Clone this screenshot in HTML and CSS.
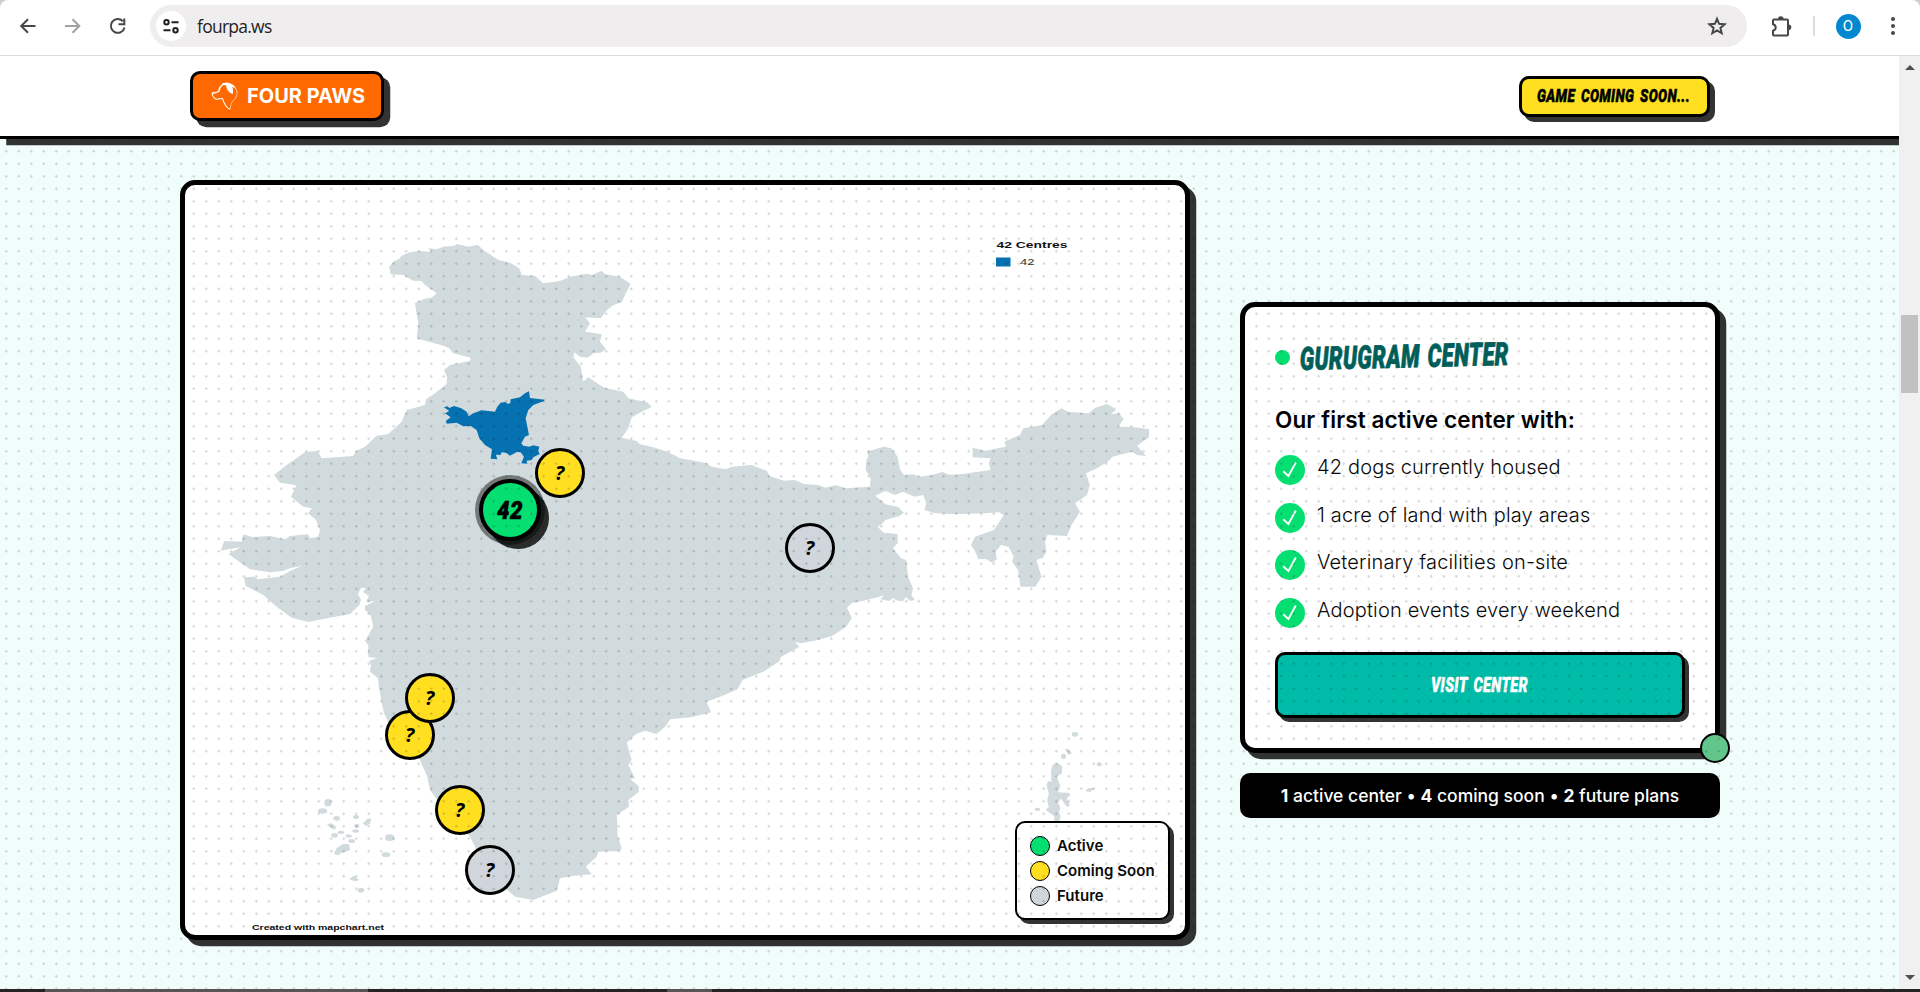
FILE: index.html
```html
<!DOCTYPE html>
<html lang="en">
<head>
<meta charset="utf-8">
<title>Four Paws</title>
<link rel="stylesheet" href="styles.css">
</head>
<body>
<div class="browser">
  <div class="toolbar">
    <div class="nav">
      <svg width="20" height="20" viewBox="0 0 20 20"><path d="M17.500 10H3.500M10 3.200L3.200 10l6.800 6.800" class="ic"/></svg>
      <svg width="20" height="20" viewBox="0 0 20 20" class="dim"><path d="M2 10h14M9.500 3.200l6.800 6.800-6.800 6.800" class="ic"/></svg>
      <svg width="20" height="20" viewBox="0 0 20 20"><path d="M14.800 5.200A6.900 6.900 0 1 0 16.500 11.500M16.300 2.500v5.800h-5.800" class="ic"/></svg>
    </div>
    <div class="omnibox">
      <div class="site"><svg width="18" height="18" viewBox="0 0 18 18"><path d="M9.500 5.200h7M1.500 13.200h7" class="ic dark"/><circle cx="4.500" cy="5.200" r="2.200" class="ic dark"/><circle cx="13.500" cy="13.200" r="2.200" class="ic dark"/></svg></div>
      <span class="url">fourpa.ws</span>
      <svg class="star" width="22" height="22" viewBox="0 0 22 22"><path d="M11 3.800l2.100 5 5.500.5-4.200 3.600 1.300 5.400L11 15.500l-4.700 2.800 1.300-5.400-4.200-3.600 5.500-.5z" class="ic"/></svg>
    </div>
    <div class="tools">
      <svg width="24" height="24" viewBox="0 0 24 24"><path d="M4 6.500a1 1 0 0 1 1-1h13a1 1 0 0 1 1 1v14a1 1 0 0 1-1 1H5a1 1 0 0 1-1-1v-3.800c3.600-.9 3.600-5.500 0-6.400z" class="ic"/><path d="M9 5a2.800 2.800 0 0 1 5.600 0zM19.500 10.500a2.800 2.800 0 0 1 0 5.600z" fill="#474747"/></svg>
      <i class="sep"></i>
      <span class="avatar">O</span>
      <svg width="6" height="22" viewBox="0 0 6 22"><g fill="#474747"><circle cx="3" cy="4" r="2"/><circle cx="3" cy="11" r="2"/><circle cx="3" cy="18" r="2"/></g></svg>
    </div>
  </div>

  <div class="viewport">
    <div class="page">
      <header class="header">
        <a class="logo">
          <svg width="27" height="28" viewBox="0 0 27 28"><path d="M1 11.500C3.500 10.500 7 11 8 9c0-4 3.500-7.500 8-7.800" fill="none" stroke="#fff" stroke-width="1.500"/><path d="M1 11.500c.5 3 3 6 5.500 5.800 2-.3 3.500-1.500 5-.5 1.500 4.500 3.500 8.700 7.400 10.500" fill="none" stroke="#fff" stroke-width="1.100"/><path d="M25.500 8c1.700 5.500-1 8.500-4 11.500-1.500 2-2 5-2.600 7.800" fill="none" stroke="#fff" stroke-width=".6"/><path d="M10.500 1.800C17-.6 23.500 1 26.300 9.500c-1.300-2.500-3-4-5-4.800.8 2.300 1 4.800.4 7.300-3-.8-6-3.500-6.700-8.500z" fill="#fff"/></svg>
          <span>FOUR PAWS</span>
        </a>
        <a class="cta"><svg width="156" height="24" class="comic"><text x="0" y="18" font-size="19" textLength="153" lengthAdjust="spacingAndGlyphs">GAME COMING SOON...</text></svg></a>
      </header>

      <main class="section">
        <div class="map">
          <svg class="india" width="1000" height="750" viewBox="185 185 1000 750">
            <g fill="#d1dadd">
              <path d="M389.300 266.700L393 262L400 258.300L401 256L410 252.300L420 251L431 252L428.300 248.300L436.700 249.300L444 246.500L453.300 246L457.300 244L468.300 246.700L477.700 244.700L483.300 250L498.300 260L510 262.700L519.300 268.300L521.700 275L535 275.700L543.300 283.300L560 281L570 276.700L586.700 273.700L592 275L601.700 270.700L605 274.300L620 276.700L630.700 284L625 295L621.700 302.300L613.300 305L607 310L600.700 318.300L585 317.300L590 323.300L585 331.700L601.700 334.300L600 341.700L606 349.300L600.700 352.700L594 353L587.300 357.700L580 356.700L574.300 352.300L573.300 357.300L580.700 366.700L583.300 381.700L588.300 377.300L598.300 384L605 388L623.300 391.700L628.300 398.300L646.700 402.300L652 406.700L641.700 411.700L631.700 417.300L628.300 428.300L621.700 437.700L636.700 441L640 444.300L653.300 447.300L668 452L680 458.300L694.400 460.700L706.500 463.300L711.700 466.700L725.400 469.300L732.300 466.700L751.300 465L766.700 470.700L769.500 476L784 480.700L795 480L804 484L818.400 485L825.300 487.700L835.600 485.300L846 488.300L870 486.700L870.700 477.700L865.600 470L866.600 460L868.500 456L866.600 451.700L883.800 446.700L891.400 448.300L897.600 456.700L900 469.300L903.800 475L913 474.300L920 476.700L932 475L942.400 472L949.300 474.700L963 474L990.600 470L988.900 463.300L990.600 458.300L972.700 457.300V447.700L985.400 450.700L1006 446.700L1004.400 441.700L1019.900 435L1023.300 428.300L1042.200 425L1050.900 415L1061.200 408.300L1068 411.700L1088.700 413.300L1095.600 407.700L1107 404L1116.300 409.300L1111 414.300L1119 413.300L1123.800 419.300L1118 426.700L1135 427.300L1149 429.300V437.300L1137 445.700L1146.200 456L1137 455L1131.800 451.700L1112.800 456.700L1107.700 461.700L1095.600 469L1086 473.300L1089.800 485L1087 495L1075 503.300L1080 511.700L1071.500 525L1067 536L1047.400 535L1045 541.700L1046.400 551.700L1043 557.700L1036.400 560L1041.500 576.700L1035.300 586.700H1020.500L1018 570L1012.300 561.700L1013.700 556.700L1008.500 546.700L1001 545L995.700 551.700L996.800 559.300L992.300 562.700L986 559L978.500 559.300L975 551L971 545L975 536.700L994 530L1003.700 515L999.200 512.300L983.700 513.300L956 514L935.500 513.300L924.500 510L926.200 503.300L923.400 495L914.800 496.700L902.800 491.700L895.200 495L885.500 491L875.200 495.700L885.500 504.300L898 507L903.800 512.700L899.300 516L885.500 520L882 524L877.600 526.700L883.800 532.700L897.600 534V543.300L893 548.300L901 558.300L906.200 560L908 576.700L913 588.300L911.400 595L914.800 600L910 601L906 597L903 601L897.600 600.700L893 598L889 601L880.400 599.300L884 595L877.600 597.300L863.200 600.700L852 603L847 607.700L851.800 618.300L846 626.700L832.200 636L818 640L801.200 643.300L795 642L799.500 646.700L781.200 656.700L778.800 661.700L763.300 671.700L742.600 680L737.500 689.300L722 696L706.500 701.700L711 712.300L691 717.300L670.300 719.300L665 726.700L656.700 734L645 730.700L636 734L626.700 742.700L631.700 760L628.300 765L635 778.300L630 779L638.700 786V792L628.300 800L629 806.700L616.700 815L617.300 823.300V835L621.700 848.300L620 851L598.300 851.700L596.700 856.700L585.700 866.700L591.700 874.300L572 876L560 878.300L556.700 890.700L533.300 900L515 896.700L508.300 890.700L480 856.700L470 836.700L440 803.300L430 790L427.300 776.700L420 760L393 730L388.300 721.700L384 713.300L379 688.300L378 678L370 671.700L371 665L369 661L377 658L368.300 657V645L365 641L373.300 626.700L370.700 615L365 610V606L375 601L366 602L369 596L363 592L366 588H361L358 594L361 600L359.300 605L350 614L326.700 618.300L308.300 622L291.700 617.700L276.700 606.700L263.300 595L245.700 586L244 577.300L254 576.700L258.300 579.300L280 576.700L290 571L301.700 566L290 568.300L283 571L270 572.300L250 569.300L228.300 554L240.700 547.300L230 549L220.700 550.700L224.300 541L241.700 541.700L243.300 534.300L252 537L270 536L285 539.300L290 536L308.300 534.300L310 538.300L318.300 536.700L320 530L316 520L308.300 513.300L311.700 508.300L303.300 506.700L291 496.700L296 486L295 485L280 482.700L274 475L286.700 465L305 452.300L317.300 450.700L321.700 458.300L353.300 456L356 451L365 446.700L376.700 435.700L388.300 434L401.700 421.700L406.700 410L425 405L426 399.300L435 393.300L446.700 384L447 377L444 370L450 365L470 361L470.700 357.700L453.300 353.300L449 348L443.300 345.700L430 342L416.700 338.300L418.300 323.300L416 310L415 303.300L424 299L432 297.500L436.700 293.300L425 285L421.700 281L413.300 280.700L403.300 275L390.700 274.300z"/>
              <g transform="translate(180 700) scale(.3333)"><ellipse cx="444" cy="308" rx="11" ry="11"/><ellipse cx="428" cy="333" rx="14" ry="8"/><ellipse cx="470" cy="355" rx="10" ry="7"/><path d="M441 374l12-5 17 12-8 9-12-9zM549 370l15-15 10 2-4 14-12 7zM462 461l8-17 20-13 18 2 2 18-26 8-10 7z"/><ellipse cx="528" cy="351" rx="9" ry="6"/><ellipse cx="531" cy="378" rx="8" ry="6"/><ellipse cx="527" cy="393" rx="10" ry="5"/><ellipse cx="483" cy="397" rx="10" ry="5"/><ellipse cx="464" cy="406" rx="10" ry="7"/><ellipse cx="506" cy="408" rx="10" ry="5"/><ellipse cx="515" cy="423" rx="10" ry="6"/><ellipse cx="629" cy="413" rx="14" ry="10"/><ellipse cx="618" cy="464" rx="13" ry="7"/><path d="M507 537l15-10 16 14-13 3z"/><ellipse cx="543" cy="571" rx="10" ry="7"/></g>
              <g transform="translate(660 700) scale(.3571 .3333)"><ellipse cx="1162" cy="103" rx="9" ry="7"/><ellipse cx="1130" cy="169" rx="7" ry="8"/><path d="M1134 148l8-2 12 15-10 3zM1190 273l10-8 17-2-12 13zM1095 210l5-16 14-5 12 10-1 22-14 8 10 30-6 18 32 2 1 8-10 8 10 22-8 4-18-26-7 14 6 15-4 15 5 8-4 20-14-2 0-16-24-20 9-8-5-20 5-18-6-25 3-15 10 2z"/><ellipse cx="1057" cy="328" rx="8" ry="5"/><ellipse cx="1230" cy="193" rx="7" ry="6"/></g>
            </g>
            <path fill="#0571b0" transform="translate(180 180) scale(.3333)" d="M792 682L802 679L808 684L822 678L844 685L860 695L866 709L880 700L905 691L945 695L952 680L962 668L976 666L982 671L991 670L992 658L1020 652L1035 640L1047 634L1050 654L1095 659L1090 664L1060 675L1045 690L1037 715L1047 765L1035 770L1024 790L1030 797L1048 800L1060 796L1078 800L1075 812L1079 822L1060 832L1055 840L1040 842L1042 851L1024 850L1032 830L1022 817L1012 815L990 827L978 818L965 817L962 825L948 824L952 838L932 836L936 808L915 795L898 775L890 750L872 738L850 739L830 728L800 731L798 722L812 712L795 700L808 693z"/>
            <rect x="996" y="257.500" width="14.500" height="9" fill="#0571b0"/>
            <g font-family="'Liberation Sans', Arial, sans-serif" fill="#111"><text x="996.500" y="247.500" font-size="9.800" font-weight="bold" textLength="71" lengthAdjust="spacingAndGlyphs">42 Centres</text><text x="1020" y="265" font-size="8.800" fill="#333" textLength="14.500" lengthAdjust="spacingAndGlyphs">42</text><text x="252" y="929.500" font-size="7.600" font-weight="bold" textLength="132" lengthAdjust="spacingAndGlyphs">Created with mapchart.net</text></g>
          </svg>

          <div class="pin active" style="left:32.5%;top:43.3%"><svg width="30" height="26" class="comic"><text x="2" y="22" font-size="25" textLength="26" lengthAdjust="spacingAndGlyphs">42</text></svg></div>
          <div class="pin soon" style="left:37.5%;top:38.4%">?</div>
          <div class="pin soon" style="left:22.5%;top:73.3%">?</div>
          <div class="pin soon" style="left:24.5%;top:68.4%">?</div>
          <div class="pin soon" style="left:27.5%;top:83.3%">?</div>
          <div class="pin future" style="left:62.5%;top:48.4%">?</div>
          <div class="pin future" style="left:30.5%;top:91.3%">?</div>

          <div class="legend">
            <div><i class="g"></i>Active</div>
            <div><i class="y"></i>Coming Soon</div>
            <div><i class="f"></i>Future</div>
          </div>
        </div>

        <div class="side">
          <section class="card">
            <div class="title"><i></i><svg width="214" height="42" class="comic teal"><text x="0" y="33" font-size="32" textLength="209" lengthAdjust="spacingAndGlyphs" transform="rotate(-1.400 0 33)">GURUGRAM CENTER</text></svg></div>
            <h3>Our first active center with:</h3>
            <ul>
              <li><svg width="30" height="30" viewBox="0 0 30 30"><circle cx="15" cy="15" r="15" fill="#05df72"/><path d="M8.200 16.300l5.200 4.700L20.800 7.500" class="tick"/></svg><span>42 dogs currently housed</span></li>
              <li><svg width="30" height="30" viewBox="0 0 30 30"><circle cx="15" cy="15" r="15" fill="#05df72"/><path d="M8.200 16.300l5.200 4.700L20.800 7.500" class="tick"/></svg><span>1 acre of land with play areas</span></li>
              <li><svg width="30" height="30" viewBox="0 0 30 30"><circle cx="15" cy="15" r="15" fill="#05df72"/><path d="M8.200 16.300l5.200 4.700L20.800 7.500" class="tick"/></svg><span>Veterinary facilities on-site</span></li>
              <li><svg width="30" height="30" viewBox="0 0 30 30"><circle cx="15" cy="15" r="15" fill="#05df72"/><path d="M8.200 16.300l5.200 4.700L20.800 7.500" class="tick"/></svg><span>Adoption events every weekend</span></li>
            </ul>
            <a class="visit"><svg width="100" height="24" class="comic white"><text x="1" y="19" font-size="21" textLength="97" lengthAdjust="spacingAndGlyphs">VISIT CENTER</text></svg></a>
            <i class="ball"></i>
          </section>
          <div class="stats"><span><b>1</b> active center • <b>4</b> coming soon • <b>2</b> future plans</span></div>
        </div>
      </main>
      <div class="dots"></div>
    </div>
    <div class="scrollbar"><i class="up"></i><i class="thumb"></i><i class="down"></i></div>
  </div>
  <div class="taskbar"><i></i><i></i></div>
</div>
</body>
</html>
```
FILE: styles.css
```css
* { box-sizing: border-box; }
body { margin: 0; font-family: Inter, sans-serif; color: #0a0a0a; background: #ccc; overflow: hidden; }
.browser { width: 1920px; height: 992px; display: flex; flex-direction: column; }
.ic { fill: none; stroke: #474747; stroke-width: 2; }
.ic.dark { stroke: #1f1f1f; }
svg { flex: none; display: block; }

.toolbar { height: 56px; background: #fff; border-bottom: 1px solid #dcdcdc; border-radius: 8px 8px 0 0; display: flex; padding: 5px 24px 0 18px; }
.nav { display: flex; gap: 25px; width: 132px; height: 42px; align-items: center; flex: none; }
.nav .dim { opacity: .5; }
.omnibox { width: 1597px; flex: none; height: 42px; border-radius: 21px; background: #efeded; display: flex; align-items: center; padding: 0 19px 0 6px; }
.site { width: 30px; height: 30px; border-radius: 50%; background: #fff; display: flex; align-items: center; justify-content: center; }
.url { margin-left: 11px; font: 17.5px "Open Sans", sans-serif; letter-spacing: -.75px; color: #1f1f1f; flex: 1; }
.tools { flex: 1; height: 42px; display: flex; align-items: center; padding-left: 21.5px; }
.sep { width: 2px; height: 20px; background: #dcdcdc; margin: 0 21px 0 20px; flex: none; }
.avatar { width: 25px; height: 25px; flex: none; border-radius: 50%; background: #0288d1; color: #fff; font: 15px/25px Roboto, sans-serif; text-align: center; margin-right: 29px; }

.viewport { height: 933px; display: flex; }
.page { position: relative; width: 1899px; background: #f0fdfb; overflow: hidden; }
.dots { position: absolute; inset: 0; z-index: 5; pointer-events: none; background: radial-gradient(circle, rgba(0,0,0,.17) 1.25px, transparent 1.3px) 0 1.5px / 12.5px 12.5px; }

.header { position: relative; z-index: 10; height: 83px; background: #fff; border-bottom: 3px solid #000; box-shadow: 6.25px 6.25px 0 rgba(0,0,0,.8); display: flex; align-items: center; justify-content: space-between; padding: 0 189px 0 190px; }
.logo { width: 194px; height: 50px; border: 3px solid #000; border-radius: 10px; background: #ff6900; box-shadow: 6.25px 6.25px 0 rgba(0,0,0,.8); color: #fff; font-weight: 700; font-size: 20px; letter-spacing: 0; display: flex; align-items: center; padding-left: 18px; gap: 9px; }
.cta { width: 191px; height: 41px; border: 3px solid #000; border-radius: 10px; background: #ffdf20; box-shadow: 5px 5px 0 rgba(0,0,0,.8); display: flex; align-items: center; justify-content: center; }
.comic { font-family: Roboto, "Open Sans", sans-serif; font-weight: 900; font-style: italic; overflow: visible; fill: #000; stroke: #000; stroke-width: .5px; letter-spacing: .5px; word-spacing: 3px; }
.teal { fill: #005f5a; stroke: #005f5a; stroke-width: .8px; }
.white { fill: #fff; stroke: #fff; }
.tick { fill: none; stroke: #fff; stroke-width: 1.9; }

.section { display: grid; grid-template-columns: 1010px 480px; column-gap: 50px; align-items: center; padding: 41px 0 0 180px; }
.map { position: relative; height: 760px; border: 5px solid #000; border-radius: 15px; background: #fff; box-shadow: 6.25px 6.25px 0 rgba(0,0,0,.8); }
.pin { position: absolute; transform: translate(-50%, -50%); width: 50px; height: 50px; border: 3px solid #000; border-radius: 50%; display: flex; align-items: center; justify-content: center; padding: 0 1px 1px 0; font: italic 700 20px "Open Sans", sans-serif; color: #000; }
.pin.active { width: 62px; height: 62px; padding: 0; border-width: 4px; background: #05df72; box-shadow: 0 0 0 4px rgba(0,0,0,.45), 8px 8px 0 rgba(0,0,0,.8); }
.soon { background: #ffdf20; }
.future { background: #d1d5dc; }
.legend { position: absolute; right: 15px; bottom: 15px; width: 155px; height: 99px; border: 2px solid #000; border-radius: 10px; background: #fff; box-shadow: 4px 4px 0 rgba(0,0,0,.8); padding: 13px; display: flex; flex-direction: column; gap: 5px; font-size: 15px; line-height: 18px; font-weight: 600; letter-spacing: .05px; }
.legend div { display: flex; align-items: center; gap: 7px; height: 20px; white-space: nowrap; }
.legend i { width: 20px; height: 20px; border: 1px solid #000; border-radius: 50%; }
.g { background: #05df72; }
.y { background: #ffdf20; }
.f { background: #d1d5dc; }

.side { display: flex; flex-direction: column; gap: 20px; }
.card { position: relative; height: 451px; border: 5px solid #000; border-radius: 15px; background: #fff; box-shadow: 6.25px 6.25px 0 rgba(0,0,0,.8); padding: 30px; }
.title { display: flex; align-items: center; gap: 10px; height: 41px; }
.title i { width: 15px; height: 15px; border-radius: 50%; background: #05df72; }
.card h3 { margin: 25px 0 0; font-size: 22.5px; line-height: 34px; font-weight: 600; letter-spacing: .12px; color: #000; }
.card ul { margin: 18px 0 0; padding: 0; list-style: none; height: 197px; display: flex; flex-direction: column; gap: 17.5px; }
.card li { display: flex; gap: 12px; height: 30px; font-size: 20px; font-weight: 300; letter-spacing: .16px; }
.card li span { line-height: 24px; white-space: nowrap; }
.visit { display: flex; align-items: center; justify-content: center; height: 66px; border: 3px solid #000; border-radius: 10px; background: #00bba7; box-shadow: 4px 4px 0 rgba(0,0,0,.8); }
.ball { position: absolute; right: -15px; bottom: -15px; width: 30px; height: 30px; border: 2px solid #000; border-radius: 50%; background: #62c58b; }
.stats { height: 45px; border-radius: 10px; background: #000; color: #fff; display: flex; align-items: center; justify-content: center; font-size: 17.5px; font-weight: 500; white-space: nowrap; }
.stats b { font-weight: 700; }

.scrollbar { width: 21px; background: #f0f0f0; display: flex; flex-direction: column; align-items: center; }
.up { border: 5px solid transparent; border-top: 0; border-bottom: 5px solid #505050; margin-top: 9px; }
.thumb { width: 17px; height: 78px; background: #c1c1c1; margin-top: 245px; }
.down { border: 5px solid transparent; border-bottom: 0; border-top: 5px solid #505050; margin: auto 0 9px; }
.taskbar { height: 3px; background: #242424; display: flex; padding-left: 45px; gap: 299px; }
.taskbar i { width: 323px; background: #555; }
.taskbar i + i { width: 45px; }
```
